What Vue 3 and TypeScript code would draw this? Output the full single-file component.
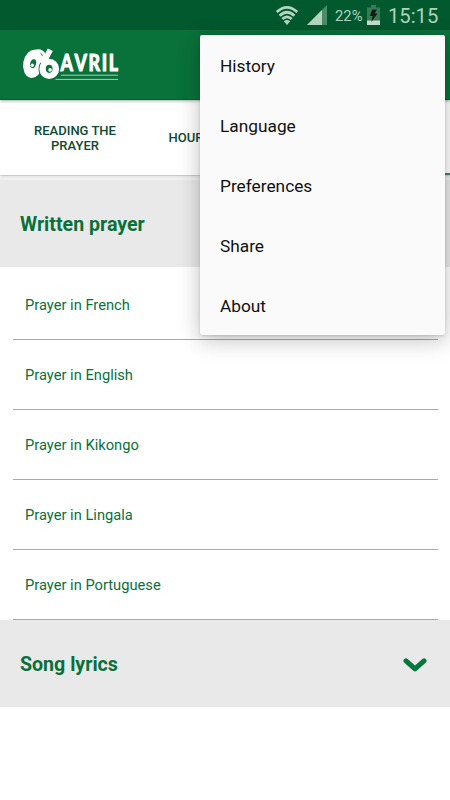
<script setup lang="ts">
interface Tab {
  label: string
  active: boolean
}

const menuItems: string[] = ['History', 'Language', 'Preferences', 'Share', 'About']
const prayers: string[] = ['French', 'English', 'Kikongo', 'Lingala', 'Portuguese']
const tabs: Tab[] = [
  { label: 'READING THE PRAYER', active: false },
  { label: 'HOUR', active: false },
  { label: '', active: true },
]
</script>

<template>
  <div class="screen">
    <div class="status">
      <svg class="wifi" width="24" height="22" viewBox="0 0 24 22">
        <g fill="none" stroke="#b5d5c0" stroke-width="2.7">
          <path d="M1.7 8.1Q12-1.3 22.3 8.1" />
          <path d="M4.6 11.7Q12 4.8 19.4 11.7" />
          <path d="M7.3 15.1Q12 10.7 16.7 15.1" />
        </g>
        <path d="M8.8 17.3Q12 14.6 15.2 17.3L12 21Z" fill="#b5d5c0" />
      </svg>
      <svg class="signal" width="20" height="20" viewBox="0 0 20 20">
        <path d="M0 20L20 0V20Z" fill="#4c8b68" />
        <path d="M0 20L15 5V20Z" fill="#b5d5c0" />
      </svg>
      <span class="percent">22%</span>
      <svg class="battery" width="13" height="20" viewBox="0 0 13 20">
        <path d="M4 0H9V2.5H13V20H0V2.5H4Z" fill="#397b56" />
        <path d="M0 15.5H13V20H0Z" fill="#c4dfcc" />
        <path d="M5.2 4.5H10L7.7 8.6H10.4L4.2 17.2L5.7 11H2.8Z" fill="#111c17" />
      </svg>
      <span class="clock">15:15</span>
    </div>

    <header class="toolbar">
      <svg class="logo" width="102" height="38" viewBox="0 0 102 38">
        <ellipse cx="10" cy="16.8" rx="9.8" ry="14.2" fill="#fff" transform="rotate(10 10 16.8)" />
        <path d="M12 4.5Q18 2 21.5 8L18 14" fill="none" stroke="#fff" stroke-width="3" />
        <ellipse cx="26.2" cy="21.9" rx="10.7" ry="10.8" fill="#09713a" />
        <ellipse cx="26.2" cy="21.9" rx="9.9" ry="10.2" fill="#fff" />
        <path d="M19.8 17L27.3 2.8" stroke="#fff" stroke-width="5.6" />
        <ellipse cx="10.1" cy="16.6" rx="2.9" ry="4.5" fill="#09713a" transform="rotate(16 10.1 16.6)" />
        <ellipse cx="26.2" cy="21.8" rx="3.4" ry="4.1" fill="#09713a" />
        <circle cx="9.3" cy="18.2" r="1.7" fill="#fff" />
        <circle cx="27.1" cy="22.9" r="1.8" fill="#fff" />
        <text class="wordmark" x="37.5" y="24.3" textLength="59" lengthAdjust="spacingAndGlyphs">AVRIL</text>
        <path d="M38 28.2H95M32.5 32.4H95" stroke="#a5d0b4" stroke-width="1" />
      </svg>
    </header>

    <nav class="tabs">
      <div v-for="(tab, i) in tabs" :key="i" class="tab" :class="{ active: tab.active }">{{ tab.label }}</div>
    </nav>

    <main>
      <section class="heading">Written prayer</section>
      <ul class="prayers">
        <li v-for="language in prayers" :key="language">Prayer in {{ language }}</li>
      </ul>
      <section class="heading">
        <span>Song lyrics</span>
        <svg width="24" height="16" viewBox="0 0 24 16">
          <path d="M3 3.8L12 11.8L21 3.8" fill="none" stroke="#08753b" stroke-width="5" stroke-linecap="round" stroke-linejoin="round" />
        </svg>
      </section>
    </main>

    <div class="menu">
      <div v-for="item in menuItems" :key="item" class="menu-item">{{ item }}</div>
    </div>
  </div>
</template>

<style>
body {
  margin: 0;
  background: #fff;
}
</style>

<style scoped>
.screen {
  position: relative;
  width: 450px;
  height: 800px;
  overflow: hidden;
  background: #fff;
  font-family: Roboto, sans-serif;
}
.status {
  display: flex;
  align-items: flex-start;
  box-sizing: border-box;
  height: 30px;
  padding-left: 275px;
  background: #02592e;
  color: #b0d3bc;
}
.wifi {
  margin-top: 4px;
}
.signal {
  margin: 5px 0 0 8px;
}
.percent {
  width: 28px;
  margin: 7px 0 0 8px;
  font-size: 14.8px;
  line-height: 18px;
}
.battery {
  margin: 5px 0 0 4px;
}
.clock {
  margin: 4px 0 0 8px;
  font-size: 20.2px;
  line-height: 24px;
}
.toolbar {
  position: relative;
  z-index: 1;
  display: flex;
  box-sizing: border-box;
  height: 70px;
  padding: 17px 0 0 23px;
  background: #09713a;
  border-bottom: 1px solid #05602e;
  box-shadow: 0 1px 3px rgba(0, 60, 25, 0.4);
}
.logo {
  overflow: visible;
}
.wordmark {
  fill: #fff;
  stroke: #fff;
  stroke-width: 0.9px;
  font-family: Lato, sans-serif;
  font-size: 22.5px;
  font-weight: 900;
  font-kerning: none;
  letter-spacing: 2px;
}
.tabs {
  display: flex;
  height: 75px;
  background: #fff;
  box-shadow: 0 1px 2px rgba(0, 0, 0, 0.3);
  position: relative;
}
.tab {
  display: flex;
  align-items: center;
  justify-content: center;
  box-sizing: border-box;
  width: 150px;
  padding: 0 30px;
  color: #0b4b34;
  font-size: 13px;
  font-weight: 500;
  line-height: 15px;
  text-align: center;
}
.tab:nth-child(2) {
  width: 130px;
  padding: 0 0 0 18.5px;
  justify-content: flex-start;
}
.tab.active {
  flex: 1;
  border-bottom: 2px solid #4b7c6b;
}
.heading {
  display: flex;
  align-items: center;
  justify-content: space-between;
  box-sizing: border-box;
  height: 87px;
  padding: 2px 23px 0 20px;
  background: #e9e9e9;
  color: #08713a;
  font-size: 19.6px;
  font-weight: 700;
}
main {
  padding-top: 2px;
}
main > .heading:first-child {
  height: 90px;
  padding-top: 2px;
  border-top: 3px solid #f0f0f0;
}
.prayers {
  margin: 0;
  padding: 3px 12px 0 13px;
  list-style: none;
}
.prayers li {
  display: flex;
  align-items: center;
  box-sizing: border-box;
  height: 70px;
  padding: 1px 12px 0;
  border-bottom: 1px solid #91b5ac;
  color: #08713a;
  font-size: 14.7px;
}
.menu {
  position: absolute;
  z-index: 2;
  top: 35px;
  left: 200px;
  box-sizing: border-box;
  width: 245px;
  height: 300px;
  border-radius: 2px;
  background: #fafafa;
  box-shadow: 0 5px 22px rgba(0, 0, 0, 0.25), 0 1px 3px rgba(0, 0, 0, 0.15);
}
.menu-item {
  display: flex;
  align-items: center;
  box-sizing: border-box;
  height: 60px;
  padding: 2px 20px 0;
  color: #111;
  font-size: 17.3px;
  line-height: 20px;
}
</style>
